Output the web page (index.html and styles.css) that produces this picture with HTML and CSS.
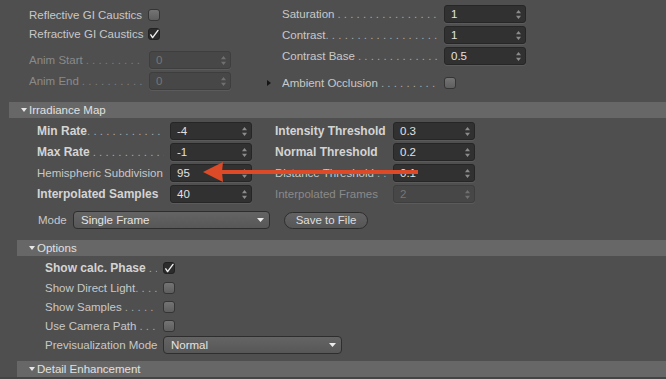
FILE: index.html
```html
<!DOCTYPE html>
<html>
<head>
<meta charset="utf-8">
<link rel="stylesheet" href="styles.css">
</head>
<body>
<div class="panel">
  <div class="top">
    <div class="col-left">
      <div class="row r19"><span class="lbl w119"><span>Reflective GI Caustics</span></span><span class="cb"></span></div>
      <div class="row r19"><span class="lbl w119"><span>Refractive GI Caustics</span></span><span class="cb on"><svg viewBox="0 0 12 12" width="12" height="12"><path d="M2.8 6.8 L4.6 9.6 L10 2.4" fill="none" stroke="#f0f0f0" stroke-width="1.4" stroke-linecap="round" stroke-linejoin="round"/></svg></span></div>
      <div class="row r18 gap8 dis"><span class="lbl w120"><span>Anim Start</span><span class="lead"></span></span><span class="num dis"><span class="v">0</span><svg class="spin" viewBox="0 0 5 9" width="5" height="9"><path d="M2.5 0 L5 3.2 L0 3.2Z M2.5 9 L5 5.8 L0 5.8Z"/></svg></span></div>
      <div class="row r18 gap3 dis"><span class="lbl w120"><span>Anim End</span><span class="lead"></span></span><span class="num dis"><span class="v">0</span><svg class="spin" viewBox="0 0 5 9" width="5" height="9"><path d="M2.5 0 L5 3.2 L0 3.2Z M2.5 9 L5 5.8 L0 5.8Z"/></svg></span></div>
    </div>
    <div class="col-right">
      <div class="row r18"><span class="tslot"></span><span class="lbl w162"><span>Saturation</span><span class="lead"></span></span><span class="num"><span class="v">1</span><svg class="spin" viewBox="0 0 5 9" width="5" height="9"><path d="M2.5 0 L5 3.2 L0 3.2Z M2.5 9 L5 5.8 L0 5.8Z"/></svg></span></div>
      <div class="row r18 gap3"><span class="tslot"></span><span class="lbl w162"><span>Contrast</span><span class="lead tight"></span></span><span class="num"><span class="v">1</span><svg class="spin" viewBox="0 0 5 9" width="5" height="9"><path d="M2.5 0 L5 3.2 L0 3.2Z M2.5 9 L5 5.8 L0 5.8Z"/></svg></span></div>
      <div class="row r18 gap3"><span class="tslot"></span><span class="lbl w162"><span>Contrast Base</span><span class="lead"></span></span><span class="num"><span class="v">0.5</span><svg class="spin" viewBox="0 0 5 9" width="5" height="9"><path d="M2.5 0 L5 3.2 L0 3.2Z M2.5 9 L5 5.8 L0 5.8Z"/></svg></span></div>
      <div class="row r18 gap9"><span class="tslot"><svg viewBox="0 0 4 6" width="4" height="6"><path d="M0 0 L4 3 L0 6Z" fill="#151515"/></svg></span><span class="lbl w162"><span>Ambient Occlusion</span><span class="lead"></span></span><span class="cb"></span></div>
    </div>
  </div>

  <div class="sec s1">
    <div class="hdr"><svg class="tri" viewBox="0 0 6 4" width="6" height="4"><path d="M0 0 L6 0 L3 4Z"/></svg><span>Irradiance Map</span></div>
    <div class="irr">
      <div class="field"><span class="lbl w133 b"><span>Min Rate</span><span class="lead tight"></span></span><span class="num"><span class="v">-4</span><svg class="spin" viewBox="0 0 5 9" width="5" height="9"><path d="M2.5 0 L5 3.2 L0 3.2Z M2.5 9 L5 5.8 L0 5.8Z"/></svg></span></div>
      <div class="field"><span class="lbl w118 b"><span>Intensity Threshold</span></span><span class="num"><span class="v">0.3</span><svg class="spin" viewBox="0 0 5 9" width="5" height="9"><path d="M2.5 0 L5 3.2 L0 3.2Z M2.5 9 L5 5.8 L0 5.8Z"/></svg></span></div>
      <div class="field"><span class="lbl w133 b"><span>Max Rate</span><span class="lead"></span></span><span class="num"><span class="v">-1</span><svg class="spin" viewBox="0 0 5 9" width="5" height="9"><path d="M2.5 0 L5 3.2 L0 3.2Z M2.5 9 L5 5.8 L0 5.8Z"/></svg></span></div>
      <div class="field"><span class="lbl w118 b"><span>Normal Threshold</span></span><span class="num"><span class="v">0.2</span><svg class="spin" viewBox="0 0 5 9" width="5" height="9"><path d="M2.5 0 L5 3.2 L0 3.2Z M2.5 9 L5 5.8 L0 5.8Z"/></svg></span></div>
      <div class="field"><span class="lbl w133"><span>Hemispheric Subdivision</span></span><span class="num"><span class="v">95</span><svg class="spin" viewBox="0 0 5 9" width="5" height="9"><path d="M2.5 0 L5 3.2 L0 3.2Z M2.5 9 L5 5.8 L0 5.8Z"/></svg></span></div>
      <div class="field"><span class="lbl w118"><span>Distance Threshold</span><span class="lead"></span></span><span class="num"><span class="v">0.1</span><svg class="spin" viewBox="0 0 5 9" width="5" height="9"><path d="M2.5 0 L5 3.2 L0 3.2Z M2.5 9 L5 5.8 L0 5.8Z"/></svg></span></div>
      <div class="field"><span class="lbl w133 b"><span>Interpolated Samples</span></span><span class="num"><span class="v">40</span><svg class="spin" viewBox="0 0 5 9" width="5" height="9"><path d="M2.5 0 L5 3.2 L0 3.2Z M2.5 9 L5 5.8 L0 5.8Z"/></svg></span></div>
      <div class="field dis"><span class="lbl w118"><span>Interpolated Frames</span></span><span class="num dis"><span class="v">2</span><svg class="spin" viewBox="0 0 5 9" width="5" height="9"><path d="M2.5 0 L5 3.2 L0 3.2Z M2.5 9 L5 5.8 L0 5.8Z"/></svg></span></div>
    </div>
    <div class="mode">
      <span class="lbl w35"><span>Mode</span></span>
      <span class="dd w197"><span>Single Frame</span><svg class="ddarrow" viewBox="0 0 7 4" width="7" height="4"><path d="M0 0 L7 0 L3.5 4Z"/></svg></span>
      <span class="btn">Save to File</span>
    </div>
  </div>

  <div class="sec s2">
    <div class="hdr"><svg class="tri" viewBox="0 0 6 4" width="6" height="4"><path d="M0 0 L6 0 L3 4Z"/></svg><span>Options</span></div>
    <div class="opts">
      <div class="orow first"><span class="lbl w118 b"><span>Show calc. Phase</span><span class="lead"></span></span><span class="cb on"><svg viewBox="0 0 12 12" width="12" height="12"><path d="M2.8 6.8 L4.6 9.6 L10 2.4" fill="none" stroke="#f0f0f0" stroke-width="1.4" stroke-linecap="round" stroke-linejoin="round"/></svg></span></div>
      <div class="orow"><span class="lbl w118"><span>Show Direct Light</span><span class="lead tight"></span></span><span class="cb"></span></div>
      <div class="orow"><span class="lbl w118"><span>Show Samples</span><span class="lead"></span></span><span class="cb"></span></div>
      <div class="orow"><span class="lbl w118"><span>Use Camera Path</span><span class="lead"></span></span><span class="cb"></span></div>
      <div class="orow"><span class="lbl w118"><span>Previsualization Mode</span></span><span class="dd w179"><span>Normal</span><svg class="ddarrow" viewBox="0 0 7 4" width="7" height="4"><path d="M0 0 L7 0 L3.5 4Z"/></svg></span></div>
    </div>
  </div>

  <div class="sec s2 last">
    <div class="hdr"><svg class="tri" viewBox="0 0 6 4" width="6" height="4"><path d="M0 0 L6 0 L3 4Z"/></svg><span>Detail Enhancement</span></div>
  </div>
  <div class="foot"></div>

  <svg class="annot" viewBox="0 0 225 30" width="225" height="30">
    <rect x="19" y="11" width="199" height="4" fill="#dc4a27"/>
    <path d="M3 13 L23 3 L22 13 L23 23Z" fill="#dc4a27"/>
  </svg>
</div>
</body>
</html>
```
FILE: styles.css
```css
html, body {
  margin: 0;
  padding: 0;
}
body {
  background: #4f4f4f;
  font-family: "Liberation Sans", Arial, sans-serif;
  font-size: 11.5px;
  color: #c8c8c8;
  width: 666px;
  height: 379px;
  overflow: hidden;
}
.panel {
  position: relative;
  width: 666px;
  height: 379px;
}
.top {
  display: flex;
  height: 102px;
}
.col-left {
  width: 267px;
  box-sizing: border-box;
  padding: 5px 0 0 29px;
  display: flex;
  flex-direction: column;
}
.col-right {
  padding-top: 5px;
  display: flex;
  flex-direction: column;
}
.row {
  display: flex;
  align-items: center;
}
.r19 { height: 19px; }
.r18 { height: 18px; }
.gap8 { margin-top: 8px; }
.gap3 { margin-top: 3px; }
.gap9 { margin-top: 9px; }
.tslot {
  width: 15px;
  display: flex;
  align-items: center;
}
.lbl {
  display: flex;
  align-items: baseline;
  overflow: hidden;
  white-space: nowrap;
  box-sizing: border-box;
  padding-right: 6px;
  flex: none;
}
.lbl > span:first-child { flex: none; }
.lbl.b { font-weight: bold; color: #d4d4d4; }
.lbl.b > span:first-child { font-size: 12px; }
.lead {
  flex: 1;
  overflow: hidden;
  white-space: nowrap;
  padding-left: 3px;
  font-weight: normal;
  color: #a8a8a8;
}
.lead.tight { padding-left: 0; }
.lead::before {
  content: ". . . . . . . . . . . . . . . . . . . . . . . . . . . . . . . .";
}
.w119 { width: 119px; }
.w120 { width: 120px; }
.w162 { width: 162px; }
.w133 { width: 133px; }
.w118 { width: 118px; }
.w35 { width: 35px; }
.dis .lbl, .dis.lbl { color: #8a8a8a; }
.dis .lead { color: #7c7c7c; }

.cb {
  width: 12px;
  height: 12px;
  box-sizing: border-box;
  border-radius: 3px;
  border: 1px solid #353535;
  background: linear-gradient(#747474, #5e5e5e);
  flex: none;
  display: flex;
}
.cb.on {
  background: #2c2c2c;
  border-color: #222;
}
.cb svg { display: block; margin: -1px; }

.num {
  width: 82px;
  height: 18px;
  box-sizing: border-box;
  background: #313131;
  border: 1px solid #262626;
  border-radius: 3px;
  box-shadow: 0 1px 0 rgba(255,255,255,0.07);
  display: flex;
  align-items: center;
  justify-content: space-between;
  padding: 0 4px 0 6px;
  color: #e2e2e2;
  flex: none;
}
.num .spin { fill: #8c8c8c; }
.num.dis {
  background: #474747;
  border-color: #3e3e3e;
  color: #767676;
}
.num.dis .spin { fill: #707070; }

.sec.s1 { margin-left: 9px; }
.sec.s2 { margin-left: 17px; }
.hdr {
  height: 16px;
  background: #676767;
  display: flex;
  align-items: center;
  padding-left: 12px;
  color: #e0e0e0;
}
.hdr .tri {
  fill: #e6e6e6;
  margin-right: 2px;
}
.irr {
  display: grid;
  grid-template-columns: 215px 200px;
  column-gap: 23px;
  row-gap: 3px;
  padding: 4px 0 0 28px;
}
.field {
  display: flex;
  align-items: center;
  height: 18px;
}
.mode {
  display: flex;
  align-items: center;
  margin-top: 8px;
  padding-left: 29px;
  height: 18px;
}
.dd {
  height: 18px;
  box-sizing: border-box;
  border: 1px solid #2e2e2e;
  border-radius: 4px;
  background: linear-gradient(#646464, #575757);
  display: flex;
  align-items: center;
  justify-content: space-between;
  padding: 0 5px 0 7px;
  color: #e4e4e4;
  flex: none;
}
.dd .ddarrow { fill: #ececec; }
.w197 { width: 197px; }
.w179 { width: 179px; }
.btn {
  margin-left: 14px;
  width: 84px;
  height: 17px;
  box-sizing: border-box;
  border: 1px solid #2e2e2e;
  border-radius: 9px;
  background: linear-gradient(#636363, #565656);
  color: #dedede;
  display: flex;
  align-items: center;
  justify-content: center;
}
.s1 + .s2 { margin-top: 11px; }
.opts {
  padding: 2px 0 0 28px;
}
.orow {
  display: flex;
  align-items: center;
  height: 19px;
}
.orow.first { height: 20px; }
.sec.last { margin-top: 7px; }
.foot {
  height: 2px;
  background: #444444;
}
.annot {
  position: absolute;
  left: 200px;
  top: 159px;
}
```
